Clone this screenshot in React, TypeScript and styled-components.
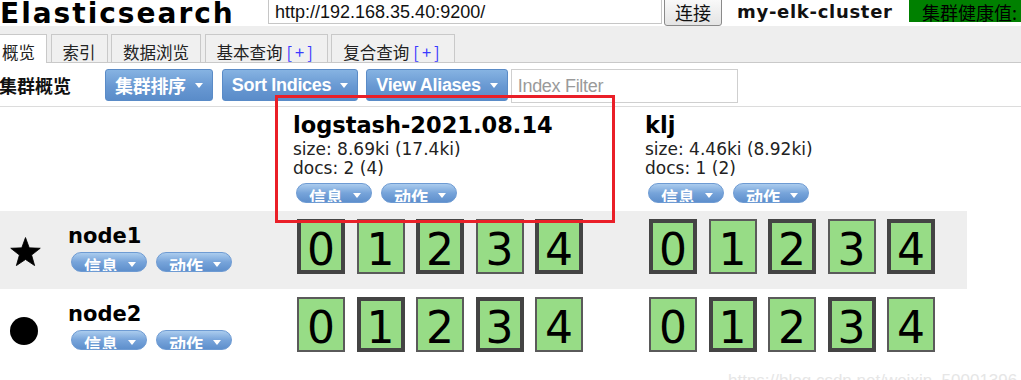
import React from "react";
import styled, { createGlobalStyle } from "styled-components";

const CJK = `"Noto Sans CJK SC", "Noto Sans", sans-serif`;
const ARIAL = `"Liberation Sans", "Noto Sans CJK SC", Arial, sans-serif`;
const VERDANA = `"DejaVu Sans", "Noto Sans CJK SC", Verdana, sans-serif`;

const GlobalStyle = createGlobalStyle`
  html, body { margin: 0; padding: 0; background: #fff; }
  body { font-family: ${VERDANA}; overflow: hidden; }
  * { box-sizing: border-box; }
`;

const Page = styled.div`
  position: relative;
  width: 1021px;
  height: 380px;
  overflow: hidden;
  background: #fff;
`;

/* ---------- header ---------- */
const Header = styled.header`
  display: flex;
  align-items: flex-start;
  height: 26px;
  background: #fff;
`;

const Brand = styled.h1`
  flex: none;
  width: 268px;
  margin: 0;
  font-family: ${VERDANA};
  font-size: 28px;
  line-height: 28px;
  font-weight: bold;
  letter-spacing: 2px;
  color: #000;
  white-space: nowrap;
`;

const UrlInput = styled.input`
  flex: none;
  width: 394px;
  height: 30px;
  margin-top: -6px;
  padding: 7px 6px 0;
  border: 1px solid #c6c6c6;
  border-top-color: #aaa;
  background: #fff;
  font-family: ${ARIAL};
  font-size: 18px;
  color: #111;
  outline: none;
`;

const ConnectButton = styled.button`
  flex: none;
  width: 58px;
  height: 32px;
  margin: -6px 0 0 2px;
  padding: 4px 0 0;
  border: 1px solid #8a8a8a;
  border-radius: 3px;
  background: linear-gradient(to bottom, #fdfdfd, #e4e4e4);
  font-family: ${CJK};
  font-size: 18px;
  line-height: 22px;
  color: #111;
`;

const ClusterName = styled.div`
  flex: none;
  width: 172px;
  margin: 1px 0 0 15px;
  font-family: ${VERDANA};
  font-weight: bold;
  font-size: 18px;
  line-height: 22px;
  letter-spacing: 0.7px;
  color: #111;
  white-space: nowrap;
`;

const Health = styled.div`
  flex: 1;
  min-width: 0;
  height: 28px;
  margin-top: -6px;
  padding: 7px 0 0 13px;
  background: #008000;
  font-family: ${CJK};
  font-size: 18px;
  line-height: 22px;
  color: #000;
  white-space: nowrap;
  overflow: hidden;
`;

/* ---------- tabs ---------- */
const TabBand = styled.nav`
  display: flex;
  align-items: flex-end;
  height: 37px;
  background: #eee;
  border-bottom: 1px solid #c9c9c9;
`;

const TabList = styled.div`
  display: flex;
  align-items: flex-end;
  margin-left: -10px;
`;

const Tab = styled.div<{ $active?: boolean }>`
  flex: none;
  height: ${(p) => (p.$active ? 29 : 28)}px;
  margin: 0 3.5px ${(p) => (p.$active ? -1 : 0)}px 0;
  padding: 7px 11px 0;
  border: 1px solid #c9c9c9;
  border-bottom: none;
  background: ${(p) => (p.$active ? "#fff" : "#f0f0f0")};
  font-family: ${CJK};
  font-size: 16.5px;
  line-height: 20px;
  color: #222;
  white-space: nowrap;
`;

const Plus = styled.span`
  margin-left: 4px;
  letter-spacing: 3px;
  color: #3a3aff;
`;

/* ---------- toolbar ---------- */
const Toolbar = styled.div`
  display: flex;
  align-items: flex-start;
  height: 44px;
  padding-top: 6px;
  border-bottom: 1px solid #dcdcdc;
`;

const ToolbarTitle = styled.div`
  flex: none;
  width: 106px;
  margin-left: -1px;
  font-family: ${CJK};
  font-weight: bold;
  font-size: 18px;
  line-height: 32px;
  color: #111;
`;

const ToolButton = styled.button<{ $gap: number }>`
  flex: none;
  display: flex;
  align-items: center;
  gap: 9px;
  height: 32px;
  margin: 0 ${(p) => p.$gap}px 0 0;
  padding: 0 9px;
  border: 1px solid #5a8bc7;
  border-radius: 3px;
  background: linear-gradient(to bottom, #86b3e2, #6898d2 55%, #5a8cc9);
  font-family: ${ARIAL};
  font-weight: bold;
  font-size: 18px;
  letter-spacing: -0.3px;
  color: #fff;
  white-space: nowrap;
`;

const Caret = styled.span<{ $top?: number }>`
  flex: none;
  width: 0;
  height: 0;
  margin-top: ${(p) => p.$top ?? 0}px;
  border-left: 4px solid transparent;
  border-right: 4px solid transparent;
  border-top: 5px solid #fff;
`;

const FilterInput = styled.input`
  flex: none;
  width: 227px;
  height: 34px;
  padding: 0 6px;
  border: 1px solid #cfcfcf;
  font-family: ${ARIAL};
  font-size: 18px;
  letter-spacing: -0.3px;
  color: #333;
  outline: none;
  &::placeholder { color: #9a9a9a; }
`;

/* ---------- cluster table ---------- */
const Row = styled.div<{ $h: number; $shade?: boolean }>`
  display: flex;
  width: 967px;
  height: ${(p) => p.$h}px;
  background: ${(p) => (p.$shade ? "#eeeeee" : "transparent")};
`;

const NodeCell = styled.div`
  flex: none;
  display: flex;
  width: 290px;
  padding-left: 10px;
`;

const NodeIcon = styled.div`
  flex: none;
  display: flex;
  align-items: center;
  width: 58px;
  padding-top: 2px;
`;

const Dot = styled.div`
  width: 28px;
  height: 28px;
  margin-top: 4px;
  border-radius: 50%;
  background: #000;
`;

const NodeInfo = styled.div`
  padding-top: 13px;
`;

const NodeName = styled.div`
  font-family: ${VERDANA};
  font-weight: bold;
  font-size: 21px;
  line-height: 24px;
  color: #000;
`;

const IndexCell = styled.div`
  flex: none;
  width: 352px;
  padding: 5px 0 0 3px;
  &:last-child { flex: 1; width: auto; }
`;

const IndexName = styled.div`
  margin-bottom: 2px;
  font-family: ${VERDANA};
  font-weight: bold;
  font-size: 22.5px;
  line-height: 26px;
  color: #000;
  white-space: nowrap;
`;

const IndexStat = styled.div`
  font-family: ${VERDANA};
  font-size: 17px;
  line-height: 19px;
  color: #222;
`;

const PillGroup = styled.div<{ $top: number }>`
  display: flex;
  gap: 9px;
  margin: ${(p) => p.$top}px 0 0 3px;
`;

const Pill = styled.span`
  flex: none;
  display: flex;
  align-items: flex-start;
  gap: 10px;
  width: 76px;
  height: 20px;
  padding: 4px 9px 0 12px;
  overflow: hidden;
  border: 1px solid #6e9bd3;
  border-radius: 10px;
  background: linear-gradient(to bottom, #abccee, #77a4da 50%, #5e8fcc);
  font-family: ${CJK};
  font-weight: bold;
  font-size: 17px;
  line-height: 17px;
  color: #fff;
`;

const ShardCell = styled.div`
  flex: none;
  display: flex;
  align-items: flex-start;
  gap: 11.5px;
  width: 352px;
  padding: 8px 0 0 7px;
  &:last-child { flex: 1; width: auto; }
`;

const Shard = styled.div<{ $primary?: boolean }>`
  flex: none;
  width: 48px;
  height: 55px;
  padding-top: 9px;
  background: #97dc86;
  box-shadow: inset 0 0 0 ${(p) => (p.$primary ? 4 : 2)}px ${(p) => (p.$primary ? "#444" : "#5a5a5a")};
  font-family: ${VERDANA};
  font-size: 44px;
  line-height: 44px;
  text-align: center;
  color: #000;
`;

/* ---------- overlays ---------- */
const Highlight = styled.div`
  position: absolute;
  left: 275px;
  top: 95px;
  width: 340px;
  height: 128px;
  border: 3px solid #ea1f28;
  pointer-events: none;
`;

const Watermark = styled.div`
  position: absolute;
  left: 728px;
  top: 371px;
  font-family: ${ARIAL};
  font-size: 17px;
  color: #e6e6e6;
  white-space: nowrap;
`;

const Star = () => (
  <svg width="31" height="29" viewBox="0 0 30 28">
    <polygon
      points="15,0.5 18.64,10.48 29.27,10.86 20.9,17.42 23.82,27.64 15,21.7 6.18,27.64 9.1,17.42 0.73,10.86 11.36,10.48"
      fill="#000"
      stroke="#000"
      strokeWidth="0.8"
      strokeLinejoin="round"
    />
  </svg>
);

const Actions = ({ top }: { top: number }) => (
  <PillGroup $top={top}>
    <Pill>
      信息
      <Caret $top={5} />
    </Pill>
    <Pill>
      动作
      <Caret $top={5} />
    </Pill>
  </PillGroup>
);

type Index = { name: string; size: string; docs: string };
const indices: Index[] = [
  { name: "logstash-2021.08.14", size: "size: 8.69ki (17.4ki)", docs: "docs: 2 (4)" },
  { name: "klj", size: "size: 4.46ki (8.92ki)", docs: "docs: 1 (2)" },
];

const nodes = [
  { name: "node1", master: true, primaries: [0, 2, 4] },
  { name: "node2", master: false, primaries: [1, 3] },
];

export default function App() {
  return (
    <Page>
      <GlobalStyle />
      <Header>
        <Brand>Elasticsearch</Brand>
        <UrlInput defaultValue="http://192.168.35.40:9200/" readOnly />
        <ConnectButton>连接</ConnectButton>
        <ClusterName>my-elk-cluster</ClusterName>
        <Health>集群健康值: green (10 of 10)</Health>
      </Header>

      <TabBand>
        <TabList>
          <Tab $active>概览</Tab>
          <Tab>索引</Tab>
          <Tab>数据浏览</Tab>
          <Tab>
            基本查询<Plus>[+]</Plus>
          </Tab>
          <Tab>
            复合查询<Plus>[+]</Plus>
          </Tab>
        </TabList>
      </TabBand>

      <Toolbar>
        <ToolbarTitle>集群概览</ToolbarTitle>
        <ToolButton $gap={9}>
          集群排序
          <Caret />
        </ToolButton>
        <ToolButton $gap={8}>
          Sort Indices
          <Caret />
        </ToolButton>
        <ToolButton $gap={3}>
          View Aliases
          <Caret />
        </ToolButton>
        <FilterInput placeholder="Index Filter" />
      </Toolbar>

      <Row $h={104}>
        <NodeCell />
        {indices.map((ix) => (
          <IndexCell key={ix.name}>
            <IndexName>{ix.name}</IndexName>
            <IndexStat>{ix.size}</IndexStat>
            <IndexStat>{ix.docs}</IndexStat>
            <Actions top={5} />
          </IndexCell>
        ))}
      </Row>

      {nodes.map((n, i) => (
        <Row key={n.name} $h={78} $shade={i % 2 === 0}>
          <NodeCell>
            <NodeIcon>{n.master ? <Star /> : <Dot />}</NodeIcon>
            <NodeInfo>
              <NodeName>{n.name}</NodeName>
              <Actions top={4} />
            </NodeInfo>
          </NodeCell>
          {indices.map((ix) => (
            <ShardCell key={ix.name}>
              {[0, 1, 2, 3, 4].map((s) => (
                <Shard key={s} $primary={n.primaries.includes(s)}>
                  {s}
                </Shard>
              ))}
            </ShardCell>
          ))}
        </Row>
      ))}

      <Highlight />
      <Watermark>https://blog.csdn.net/weixin_50001396</Watermark>
    </Page>
  );
}
